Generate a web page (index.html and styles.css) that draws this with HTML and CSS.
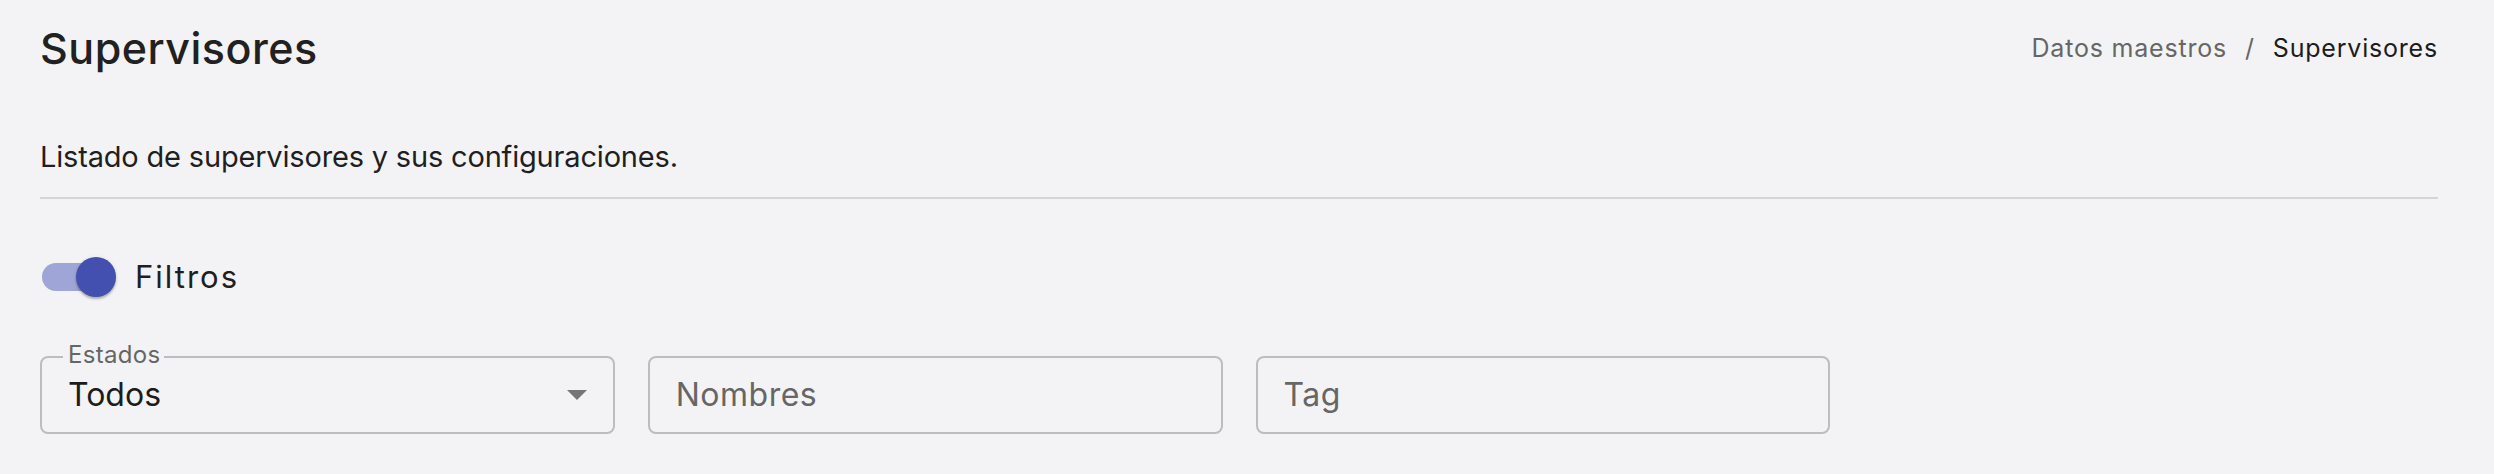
FILE: index.html
```html
<!DOCTYPE html>
<html lang="es">
<head>
<meta charset="utf-8">
<title>Supervisores</title>
<link rel="stylesheet" href="styles.css">
</head>
<body>
<main class="page">
  <header class="page-header">
    <h1 class="page-title">Supervisores</h1>
    <nav class="breadcrumb">
      <span class="crumb">Datos maestros</span>
      <span class="crumb-sep">/</span>
      <span class="crumb crumb-current">Supervisores</span>
    </nav>
  </header>
  <p class="page-subtitle">Listado de supervisores y sus configuraciones.</p>
  <hr class="divider">
  <label class="toggle-row">
    <span class="switch">
      <span class="switch-track"></span>
      <span class="switch-thumb"></span>
    </span>
    <span class="toggle-label">Filtros</span>
  </label>
  <section class="filters">
    <div class="field field-select">
      <span class="field-label">Estados</span>
      <span class="field-value">Todos</span>
      <svg class="select-arrow" width="20" height="10" viewBox="0 0 20 10"><path d="M0 0 L10 10 L20 0 Z" fill="#757575"/></svg>
    </div>
    <div class="field">
      <input class="field-input" type="text" placeholder="Nombres">
    </div>
    <div class="field">
      <input class="field-input" type="text" placeholder="Tag">
    </div>
  </section>
</main>
</body>
</html>
```
FILE: styles.css
```css
* { box-sizing: border-box; }
html, body {
  margin: 0;
  background: #f3f3f5;
}
body {
  font-family: "Inter", "Liberation Sans", sans-serif;
  color: #1f1f1f;
}
.page {
  padding: 0 56px 0 40px;
}
.page-header {
  display: flex;
  justify-content: space-between;
  align-items: center;
  padding-top: 26px;
}
.page-title {
  margin: 0;
  font-size: 43px;
  line-height: 44px;
  font-weight: 500;
  letter-spacing: 0.5px;
  color: #212121;
}
.breadcrumb {
  display: flex;
  align-items: center;
  font-size: 25px;
  line-height: 25px;
  letter-spacing: 0.8px;
}
.crumb { color: #666666; }
.crumb-sep {
  color: #666666;
  margin: 0 18px;
}
.crumb-current { color: #1c1c1c; }
.page-subtitle {
  margin: 72px 0 0;
  font-size: 29px;
  line-height: 29px;
  letter-spacing: -0.18px;
  color: #1f1f1f;
}
.divider {
  margin: 26px 0 0;
  border: 0;
  height: 2px;
  background: #d4d4d7;
}
.toggle-row {
  display: flex;
  align-items: center;
  margin-top: 58px;
  height: 40px;
}
.switch {
  position: relative;
  width: 74px;
  height: 40px;
  flex: none;
}
.switch-track {
  position: absolute;
  left: 2px;
  top: 6px;
  width: 68px;
  height: 28px;
  border-radius: 14px;
  background: #9fa5d6;
}
.switch-thumb {
  position: absolute;
  left: 36px;
  top: 0;
  width: 40px;
  height: 40px;
  border-radius: 50%;
  background: #4350af;
  box-shadow: 0 2px 2px rgba(0,0,0,0.22), 0 1px 4px rgba(0,0,0,0.12);
}
.toggle-label {
  margin-left: 21px;
  font-size: 31px;
  line-height: 40px;
  letter-spacing: 2px;
  color: #1f1f1f;
}
.filters {
  display: grid;
  grid-template-columns: repeat(4, 1fr);
  column-gap: 33px;
  margin-top: 59px;
}
.field {
  position: relative;
  height: 78px;
  border: 2px solid #bdbdbd;
  border-radius: 8px;
  display: flex;
  align-items: center;
  padding: 0 26px;
}
.field-label {
  position: absolute;
  left: 21px;
  top: -15px;
  padding: 0 4px 0 5px;
  background: #f3f3f5;
  font-size: 24px;
  line-height: 24px;
  letter-spacing: 0.3px;
  color: #666666;
}
.field-value {
  flex: 1;
  font-size: 32px;
  line-height: 74px;
  color: #1c1c1c;
}
.select-arrow {
  flex: none;
}
.field-input {
  width: 100%;
  border: 0;
  outline: none;
  background: transparent;
  padding: 0;
  font-family: inherit;
  font-size: 32px;
  line-height: 74px;
  height: 74px;
  letter-spacing: 0.5px;
  color: #1c1c1c;
}
.field-input::placeholder {
  color: #666666;
  opacity: 1;
}
```
